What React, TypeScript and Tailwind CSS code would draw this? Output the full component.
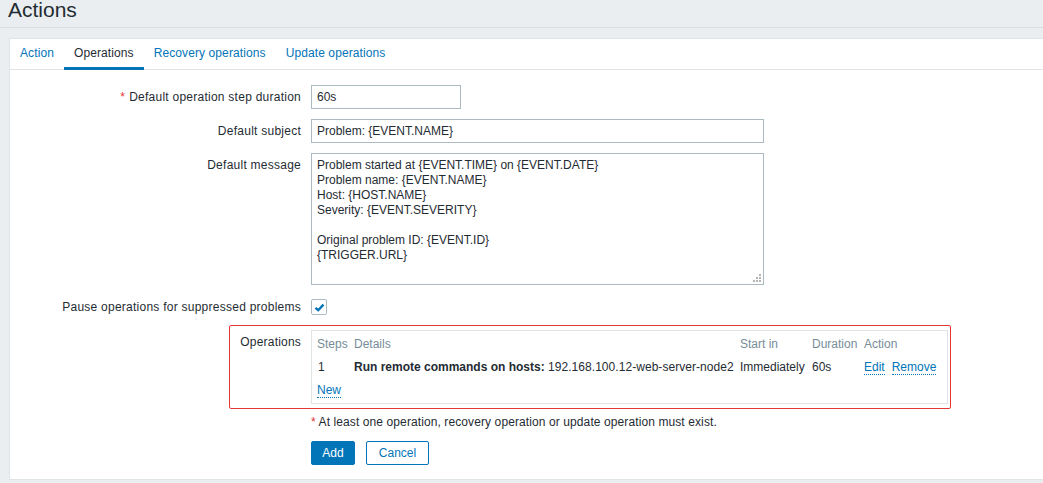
import React from 'react'

const ink = 'text-[#1f2c33]'

function Label({ children, required }: { children: React.ReactNode; required?: boolean }) {
  return (
    <div className="w-[291px] shrink-0 text-right pt-[5px] leading-[14px] tracking-[0.25px]">
      {required && <span className="text-[#e33734] mr-[4px]">*</span>}
      {children}
    </div>
  )
}

function DotLink({ children }: { children: React.ReactNode }) {
  return <span className="text-[#0275b8] border-b border-dotted border-[#0275b8] leading-[14px]">{children}</span>
}

const message = `Problem started at {EVENT.TIME} on {EVENT.DATE}
Problem name: {EVENT.NAME}
Host: {HOST.NAME}
Severity: {EVENT.SEVERITY}

Original problem ID: {EVENT.ID}
{TRIGGER.URL}`

export default function App() {
  const tabs = ['Action', 'Operations', 'Recovery operations', 'Update operations']

  return (
    <div className={`h-[483px] overflow-hidden bg-[#ebeef0] text-[12px] ${ink}`} style={{ fontFamily: '"Liberation Sans", Arial, sans-serif' }}>
      <div className="h-[28px] border-b border-[#d9dee1] px-[8px]">
        <h1 className="text-[21px] leading-[20px] font-normal">Actions</h1>
      </div>

      <div className="mt-[10px] ml-[9px] bg-white border-l border-t border-b border-[#dfe4e7]">
        <div className="flex border-b border-[#dfe4e7] tracking-[0.1px]">
          {tabs.map(t => (
            <div
              key={t}
              className={
                t === 'Operations'
                  ? 'h-[31px] mb-[-1px] px-[10px] flex items-center border-b-[3px] border-[#0275b8] text-[#1f2c33]'
                  : 'h-[31px] mb-[-1px] px-[10px] flex items-center border-b-[3px] border-transparent text-[#0275b8]'
              }
            >
              {t}
            </div>
          ))}
        </div>

        <div className="pt-[15px] pb-[14px]">
          <div className="flex gap-[10px]">
            <Label required>Default operation step duration</Label>
            <input readOnly value="60s" className="w-[150px] h-[24px] border border-[#acbbc2] px-[5px] outline-none" />
          </div>

          <div className="flex gap-[10px] mt-[10px]">
            <Label>Default subject</Label>
            <input readOnly value="Problem: {EVENT.NAME}" className="w-[453px] h-[24px] border border-[#acbbc2] px-[5px] outline-none" />
          </div>

          <div className="flex gap-[10px] mt-[10px]">
            <Label>Default message</Label>
            <div className="relative">
              <textarea
                readOnly
                value={message}
                className="block w-[453px] h-[132px] border border-[#acbbc2] px-[5px] pt-[4px] leading-[15px] resize-none outline-none"
              />
              <svg className="absolute right-[3px] bottom-[3px]" width="8" height="8" viewBox="0 0 8 8">
                <rect x="6" y="0" width="2" height="2" fill="#b4b4b4" />
                <rect x="3" y="3" width="2" height="2" fill="#b4b4b4" />
                <rect x="6" y="3" width="2" height="2" fill="#b4b4b4" />
                <rect x="0" y="6" width="2" height="2" fill="#b4b4b4" />
                <rect x="3" y="6" width="2" height="2" fill="#b4b4b4" />
                <rect x="6" y="6" width="2" height="2" fill="#b4b4b4" />
              </svg>
            </div>
          </div>

          <div className="flex gap-[10px] mt-[10px] h-[24px]">
            <Label>Pause operations for suppressed problems</Label>
            <div className="flex items-center">
              <div className="w-[16px] h-[16px] border border-[#acbbc2] rounded-[2px] flex items-center justify-center">
                <svg width="13" height="13" viewBox="0 0 13 13">
                  <path d="M2.5 6.8 L5.2 9.2 L10.5 3.6" fill="none" stroke="#0275b8" strokeWidth="2.4" />
                </svg>
              </div>
            </div>
          </div>

          <div className="mt-[6px] ml-[219px] w-[722px] flex gap-[10px] border border-[#e33734] rounded-[2px] pt-[4px] pb-[4px] pr-[2px]">
            <div className="w-[71px] shrink-0 text-right pt-[5px] leading-[14px] tracking-[0.2px]">Operations</div>
            <div className="w-[637px] border border-[#dfe4e7] pt-[6px] pb-[5px] px-[5px] leading-[14px]">
              <div className="grid grid-cols-[37px_386px_72px_52px_1fr] text-[#768d99] whitespace-nowrap">
                <div>Steps</div>
                <div>Details</div>
                <div>Start in</div>
                <div>Duration</div>
                <div>Action</div>
              </div>
              <div className="grid grid-cols-[37px_386px_72px_52px_1fr] mt-[9px] whitespace-nowrap">
                <div className="pl-[1px]">1</div>
                <div>
                  <span className="font-bold">Run remote commands on hosts:</span>{' '}
                  <span className="tracking-[0.05px]">192.168.100.12-web-server-node2</span>
                </div>
                <div>Immediately</div>
                <div>60s</div>
                <div className="flex gap-[7px]">
                  <DotLink>Edit</DotLink>
                  <DotLink>Remove</DotLink>
                </div>
              </div>
              <div className="mt-[8px] flex">
                <span className="text-[#0275b8] border-b border-dotted border-[#0275b8]">New</span>
              </div>
            </div>
          </div>

          <div className="ml-[301px] mt-[6px] leading-[14px] tracking-[0.1px]">
            <span className="text-[#e33734]">*</span> At least one operation, recovery operation or update operation must exist.
          </div>

          <div className="ml-[301px] mt-[12px] flex gap-[11px]">
            <button className="w-[44px] h-[24px] bg-[#0275b8] border border-[#0275b8] text-white rounded-[2px]">Add</button>
            <button className="w-[63px] h-[24px] bg-white border border-[#0275b8] text-[#0275b8] rounded-[2px]">Cancel</button>
          </div>
        </div>
      </div>
    </div>
  )
}
